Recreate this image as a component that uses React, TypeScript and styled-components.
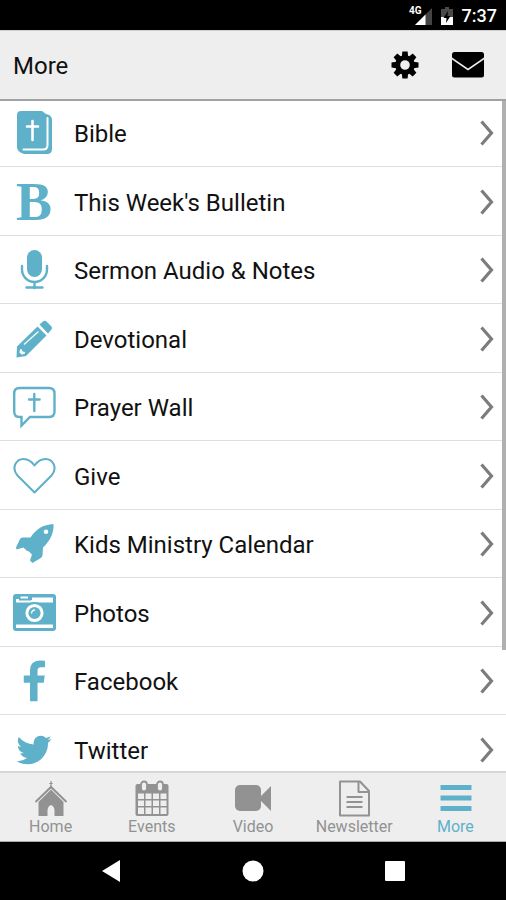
import React from "react";
import styled, { createGlobalStyle } from "styled-components";

const TEAL = "#5fb1ca";
const GRAY = "#929292";

const GlobalStyle = createGlobalStyle`
  *, *::before, *::after { box-sizing: border-box; }
  body { margin: 0; background: #000; font-family: Roboto, "Noto Sans", sans-serif; }
`;

const Screen = styled.div`
  display: flex;
  flex-direction: column;
  height: 100vh;
  overflow: hidden;
  background: #fff;
`;

const StatusBar = styled.div`
  flex: none;
  display: flex;
  align-items: center;
  justify-content: flex-end;
  height: 30px;
  padding: 2px 9px 0 0;
  background: #000;
  color: #fff;
`;

const Signal = styled.svg`
  width: 24px;
  height: 20px;
  margin-right: 8px;
`;

const Battery = styled.svg`
  width: 12px;
  height: 20px;
  margin-right: 9px;
`;

const Clock = styled.time`
  font-size: 18px;
  line-height: 28px;
  font-weight: 500;
`;

const Header = styled.header`
  flex: none;
  position: relative;
  z-index: 2;
  display: flex;
  align-items: center;
  height: 69px;
  padding: 0 21px 0 13px;
  background: #eee;
  border-top: 1px solid #cfcfcf;
  box-shadow: 0 2px 0 #a2a2a2;
`;

const Title = styled.h1`
  flex: 1;
  margin: 0;
  padding-top: 2px;
  font-size: 24px;
  line-height: 32px;
  font-weight: 400;
  color: #111;
`;

const HeaderButton = styled.button`
  display: flex;
  align-items: center;
  justify-content: center;
  width: 34px;
  height: 32px;
  margin-left: 29px;
  padding: 0;
  border: 0;
  background: none;
  color: #000;
`;

const ListArea = styled.main`
  position: relative;
  flex: 1;
  min-height: 0;
  overflow: hidden;
`;

const List = styled.ul`
  margin: 0;
  padding: 0;
  list-style: none;
`;

const Item = styled.li`
  height: 68px;
  border-bottom: 1px solid #dfdfdf;
  &:nth-child(even) { height: 69px; }
`;

const ItemLink = styled.a`
  display: flex;
  align-items: center;
  height: 100%;
  padding: 1px 11px 0 12px;
  color: #111;
  text-decoration: none;
`;

const IconBox = styled.span`
  flex: none;
  display: flex;
  align-items: center;
  justify-content: center;
  width: 44px;
  height: 44px;
  margin-right: 18px;
  color: ${TEAL};
`;

const Initial = styled.span`
  font-family: "Liberation Serif", serif;
  font-size: 54px;
  line-height: 44px;
  font-weight: 700;
`;

const Label = styled.span`
  flex: 1;
  padding-top: 2px;
  font-size: 24px;
  line-height: 32px;
`;

const Chevron = styled.svg`
  flex: none;
  width: 16px;
  height: 28px;
`;

const ScrollThumb = styled.div`
  position: absolute;
  top: 0;
  right: 0;
  width: 4px;
  height: 82%;
  background: #b0b0b0;
`;

const TabBar = styled.nav`
  flex: none;
  display: grid;
  grid-template-columns: repeat(5, 1fr);
  height: 71px;
  border-top: 2px solid #d6d6d6;
  border-bottom: 1px solid #a8a8a8;
  background: #eee;
`;

const Tab = styled.a<{ $active?: boolean }>`
  display: flex;
  flex-direction: column;
  align-items: center;
  padding-top: 7px;
  font-size: 16px;
  line-height: 18px;
  text-decoration: none;
  color: ${(p) => (p.$active ? TEAL : GRAY)};
`;

const SystemBar = styled.div`
  flex: none;
  display: grid;
  grid-template-columns: repeat(3, 142px);
  justify-content: center;
  height: 58px;
  background: #000;
`;

const SystemButton = styled.button`
  display: flex;
  align-items: center;
  justify-content: center;
  padding: 0;
  border: 0;
  background: none;
  color: #fff;
`;

const Glyph = ({ children }: { children: React.ReactNode }) => (
  <svg width="44" height="44" viewBox="0 0 44 44" fill="currentColor" aria-hidden="true">
    {children}
  </svg>
);

const BibleIcon = () => (
  <Glyph>
    <path d="M9 0H30L34 3Q40 4 40 9V38Q40 43 35 43H12Q5 41 5 36V4Q5 0 9 0Z" />
    <path d="M35.500 7V34Q35.500 38.500 31 38.500H11.500" fill="none" stroke="#fff" strokeWidth="2" strokeLinecap="round" />
    <path d="M20.500 10V29M15 15.500H26" fill="none" stroke="#fff" strokeWidth="2.600" strokeLinecap="round" />
  </Glyph>
);

const MicIcon = () => (
  <Glyph>
    <rect x="15" y="2" width="15" height="27" rx="7.500" />
    <path d="M10 18V21.500A12.500 12.500 0 0 0 35 21.500V18M22.500 34V40M14.500 39.500H30.500" fill="none" stroke="currentColor" strokeWidth="2.400" strokeLinecap="round" />
  </Glyph>
);

const PencilIcon = () => (
  <Glyph>
    <path d="M25.500 9.500L34.500 18.500L14 39L4.500 40.500L5 29.500Z" />
    <path d="M27.500 7.500L31 4.500Q33 3 35 5L39 9Q41 11 39 13L36 16.500Z" />
    <path d="M12 27.500L26.500 14.500" fill="none" stroke="#fff" strokeWidth="1.200" />
    <path d="M8 32.500L9.500 32L10.500 34.500L13 35L12.500 37L9.500 37.500L7.500 35.500Z" fill="#fff" />
  </Glyph>
);

const PrayerIcon = () => (
  <Glyph>
    <path d="M7.500 3H37Q42.500 3 42.500 8.500V26.500Q42.500 32 37 32H18L9.500 40.500V32H7.500Q2.200 32 2.200 26.500V8.500Q2.200 3 7.500 3Z" fill="none" stroke="currentColor" strokeWidth="2.400" />
    <path d="M22.300 9V26M17 14.500H27.600" fill="none" stroke="currentColor" strokeWidth="2.400" strokeLinecap="round" />
  </Glyph>
);

const HeartIcon = () => (
  <Glyph>
    <path d="M22.500 38.500L5.500 21.500C-1 14 4 5 11.500 5C17 5 20 8 22.500 11.500C25 8 28 5 33.500 5C41 5 46 14 39.500 21.500Z" fill="none" stroke="currentColor" strokeWidth="2.100" strokeLinejoin="round" />
  </Glyph>
);

const RocketIcon = () => (
  <Glyph>
    <path fillRule="evenodd" d="M41.500 2C42 10 39 18 31 25.500L30.500 33.500Q30 35.500 28 36.500L20.500 41L18 38.500L20 32.500L17 29.500L14.500 28.500L11.500 25.500L4.500 27.500L4 25.500L8 17Q9 15 11.500 15.500L18.500 15.500C24 7 31 2.500 41.500 2ZM34 7.500A2.300 2.300 0 1 0 34 12.100A2.300 2.300 0 1 0 34 7.500Z" />
  </Glyph>
);

const CameraIcon = () => (
  <Glyph>
    <rect x="1" y="3" width="43" height="37" rx="3" />
    <path d="M4 8H19V9H20V6.500H41V11.500H4ZM4 33.500H41V37H4Z" fill="#fff" />
    <path d="M7 4H19V9.500H7Z" />
    <path d="M8.500 5.500H16V7.500H8.500Z" fill="#fff" />
    <circle cx="22.500" cy="22" r="11" />
    <circle cx="22.500" cy="22" r="7.600" fill="none" stroke="#fff" strokeWidth="3" />
    <path d="M19.500 22.500A3.200 3.200 0 0 1 23 19" fill="none" stroke="#fff" strokeWidth="1.400" />
  </Glyph>
);

const FacebookIcon = () => (
  <svg width="46" height="46" viewBox="0 -60 1792 1792" fill="currentColor" aria-hidden="true">
    <path d="M1343 12v264h-157q-86 0-116 36t-30 108v189h293l-39 296h-254v759h-306v-759h-255v-296h255v-218q0-186 104-288.500t277-102.500q147 0 228 12z" />
  </svg>
);

const TwitterIcon = () => (
  <svg width="40" height="40" viewBox="0 0 1792 1792" fill="currentColor" aria-hidden="true">
    <path d="M1684 408q-67 98-162 167 1 14 1 42 0 130-38 259.500t-115.500 248.500-184.500 210.500-258 146-323 54.500q-271 0-496-145 35 4 78 4 225 0 401-138-105-2-188-64.500t-114-159.500q33 5 61 5 43 0 85-11-112-23-185.500-111.500t-73.500-205.500v-4q68 38 146 41-66-44-105-115t-39-154q0-88 44-163 121 149 294.500 238.500t371.500 99.500q-8-38-8-74 0-134 94.500-228.500t228.500-94.500q140 0 236 102 109-21 205-78-37 115-142 178 93-10 186-50z" />
  </svg>
);

const GearIcon = () => (
  <svg width="28" height="28" viewBox="-14 -14 28 28" fill="none" aria-hidden="true">
    <circle r="7.300" stroke="currentColor" strokeWidth="5" />
    {[0, 45, 90, 135, 180, 225, 270, 315].map((a) => (
      <path key={a} d="M-3.200 -8.500L-2.600 -13.500H2.600L3.200 -8.500Z" fill="currentColor" transform={`rotate(${a})`} />
    ))}
  </svg>
);

const MailIcon = () => (
  <svg width="32" height="26" viewBox="0 0 32 26" fill="currentColor" aria-hidden="true">
    <path d="M2.500 0H29.500Q32 0 32 2.500V5.500L16 16.500L0 5.500V2.500Q0 0 2.500 0Z" />
    <path d="M0 7.500L16 18.500L32 7.500V23Q32 25.500 29.500 25.500H2.500Q0 25.500 0 23Z" />
  </svg>
);

const TabGlyph = ({ children }: { children: React.ReactNode }) => (
  <svg width="38" height="38" viewBox="0 0 38 38" fill="currentColor" aria-hidden="true">
    {children}
  </svg>
);

const ChurchIcon = () => (
  <TabGlyph>
    <path d="M19 1V9M17.300 3.500H20.700" fill="none" stroke="currentColor" strokeWidth="1.200" />
    <path d="M3.500 22L19 7L34.500 22" fill="none" stroke="currentColor" strokeWidth="2" />
    <path d="M19 9.500L31.500 22V36H22.500V30Q22 26 19 25Q16 26 15.500 30V36H6.500V22Z" />
  </TabGlyph>
);

const CalendarIcon = () => (
  <TabGlyph>
    <rect x="2.500" y="4" width="33" height="32" rx="2" />
    <path d="M5 13.500H11V19H5ZM12.500 13.500H18.500V19H12.500ZM20 13.500H26V19H20ZM27.500 13.500H33.500V19H27.500ZM5 20.500H11V26H5ZM12.500 20.500H18.500V26H12.500ZM20 20.500H26V26H20ZM27.500 20.500H33.500V26H27.500ZM5 27.500H11V34H5ZM12.500 27.500H18.500V34H12.500ZM20 27.500H26V34H20ZM27.500 27.500H33.500V34H27.500Z" fill="#eee" />
    <rect x="8" y="1.500" width="6" height="10" rx="3" fill="#eee" stroke="currentColor" strokeWidth="1.800" />
    <rect x="24" y="1.500" width="6" height="10" rx="3" fill="#eee" stroke="currentColor" strokeWidth="1.800" />
  </TabGlyph>
);

const VideoIcon = () => (
  <TabGlyph>
    <rect x="1" y="5" width="26" height="26" rx="5" />
    <path d="M27 16L37 6V31L27 21Z" />
  </TabGlyph>
);

const NewsIcon = () => (
  <TabGlyph>
    <path d="M5 1.500H25L34 11V35.500H5ZM23.500 1.500V12H34" fill="none" stroke="currentColor" strokeWidth="2" strokeLinejoin="round" />
    <path d="M11.500 17H27.500M11.500 22H27.500M11.500 27H27.500" fill="none" stroke="currentColor" strokeWidth="2" />
  </TabGlyph>
);

const MenuIcon = () => (
  <TabGlyph>
    <path d="M4.500 7.500H35.500M4.500 18H35.500M4.500 28.500H35.500" fill="none" stroke="currentColor" strokeWidth="5" />
  </TabGlyph>
);

const items = [
  { label: "Bible", icon: <BibleIcon /> },
  { label: "This Week's Bulletin", icon: <Initial aria-hidden="true">B</Initial> },
  { label: "Sermon Audio & Notes", icon: <MicIcon /> },
  { label: "Devotional", icon: <PencilIcon /> },
  { label: "Prayer Wall", icon: <PrayerIcon /> },
  { label: "Give", icon: <HeartIcon /> },
  { label: "Kids Ministry Calendar", icon: <RocketIcon /> },
  { label: "Photos", icon: <CameraIcon /> },
  { label: "Facebook", icon: <FacebookIcon /> },
  { label: "Twitter", icon: <TwitterIcon /> },
];

const tabs = [
  { label: "Home", icon: <ChurchIcon /> },
  { label: "Events", icon: <CalendarIcon /> },
  { label: "Video", icon: <VideoIcon /> },
  { label: "Newsletter", icon: <NewsIcon /> },
  { label: "More", icon: <MenuIcon />, active: true },
];

export default function App() {
  return (
    <Screen>
      <GlobalStyle />
      <StatusBar>
        <Signal viewBox="0 0 24 20" aria-label="4G signal">
          <path d="M23 2V19H6Z" fill="#444" />
          <path d="M16.500 8.500V19H6Z" fill="#fff" />
          <text x="0" y="8" fill="#fff" fontSize="10" fontWeight="700" fontFamily="Roboto, sans-serif">4G</text>
        </Signal>
        <Battery viewBox="0 0 12 20" aria-label="Battery">
          <path d="M4 1H8V3H12V19H0V3H4Z" fill="#4a4a4a" />
          <path d="M0 11H12V19H0Z" fill="#fff" />
          <path d="M7 5L2.500 12H5.500L5 17L9.500 10H6.500Z" fill="#000" />
        </Battery>
        <Clock>7:37</Clock>
      </StatusBar>
      <Header>
        <Title>More</Title>
        <HeaderButton type="button" aria-label="Settings"><GearIcon /></HeaderButton>
        <HeaderButton type="button" aria-label="Messages"><MailIcon /></HeaderButton>
      </Header>
      <ListArea>
        <List>
          {items.map((item) => (
            <Item key={item.label}>
              <ItemLink href="#">
                <IconBox>{item.icon}</IconBox>
                <Label>{item.label}</Label>
                <Chevron viewBox="0 0 16 28" aria-hidden="true">
                  <path d="M2.500 2.500L12.500 14L2.500 25.500" fill="none" stroke="#7c7c7c" strokeWidth="3.200" />
                </Chevron>
              </ItemLink>
            </Item>
          ))}
        </List>
        <ScrollThumb />
      </ListArea>
      <TabBar>
        {tabs.map((tab) => (
          <Tab key={tab.label} href="#" $active={tab.active}>
            {tab.icon}
            <span>{tab.label}</span>
          </Tab>
        ))}
      </TabBar>
      <SystemBar>
        <SystemButton type="button" aria-label="Back">
          <svg width="18" height="22" viewBox="0 0 18 22"><path d="M18 0V22L0 11Z" fill="currentColor" /></svg>
        </SystemButton>
        <SystemButton type="button" aria-label="Home screen">
          <svg width="22" height="22" viewBox="0 0 22 22"><circle cx="11" cy="11" r="10.500" fill="currentColor" /></svg>
        </SystemButton>
        <SystemButton type="button" aria-label="Recent apps">
          <svg width="20" height="20" viewBox="0 0 20 20"><rect width="20" height="20" rx="1" fill="currentColor" /></svg>
        </SystemButton>
      </SystemBar>
    </Screen>
  );
}
